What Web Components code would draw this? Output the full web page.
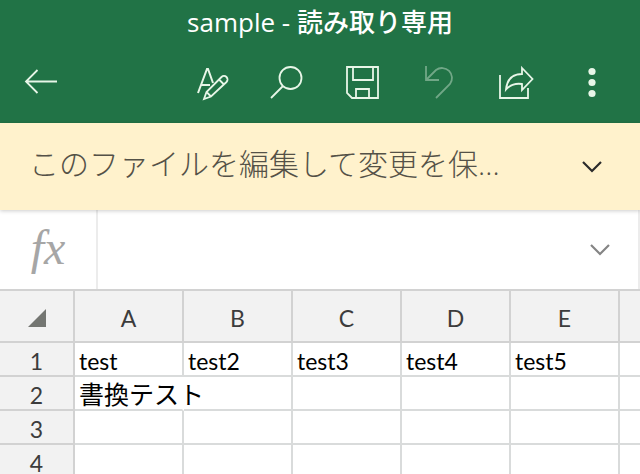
<!DOCTYPE html>
<html lang="ja">
<head>
<meta charset="utf-8">
<meta name="viewport" content="width=device-width, initial-scale=1">
<title>sample</title>
<style>
  body {
    margin: 0;
    background: #fff;
    font-family: "Open Sans", "Noto Sans CJK JP", sans-serif;
  }
  b {
    font-weight: 500;
  }
</style>
</head>
<body>
<sheet-app>
  <app-header slot="header">
    <span slot="title">sample - <b>読み取り専用</b></span>
    <icon-button slot="back" icon="back" label="戻る"></icon-button>
    <icon-button icon="edit" label="編集"></icon-button>
    <icon-button icon="search" label="検索"></icon-button>
    <icon-button icon="save" label="保存"></icon-button>
    <icon-button icon="undo" label="元に戻す" disabled></icon-button>
    <icon-button icon="share" label="共有"></icon-button>
    <icon-button icon="more" label="その他"></icon-button>
  </app-header>
  <message-bar slot="header">このファイルを編集して変更を保...</message-bar>
  <formula-bar slot="header"></formula-bar>
  <sheet-grid></sheet-grid>
</sheet-app>

<script>
const icons = {
  back: '<path d="M36 19.5H5M16.500 8L5 19.500L16.500 31"/>',
  edit: '<path stroke-width="2" d="M6 31L15 7h1l5 14M9 23h9"/><path d="M12 37l2.500-7L29.500 15a3.300 3.300 0 0 1 5 5L19 34.500zM14.500 30l4.500 4.500M27 17.500l5 5"/>',
  search: '<circle cx="22.500" cy="16" r="11"/><path d="M15 24L3 36"/>',
  save: '<path d="M3 5h31v31H8l-5-5zM9 5v13h20V5M12 36v-9h13v9"/>',
  undo: '<path d="M6 4v14h13M6 18L16 8a10 10 0 0 1 14 14L16 36"/>',
  share: '<path d="M4 13v23h28V26"/><path d="M26 6l10.500 11L26 28v-6c-7-1-12 1-16 5.500C11 18 16 12 26 12z"/>',
  more: '<g fill="currentColor" stroke="none"><circle cx="20" cy="9.500" r="3.600"/><circle cx="20" cy="20.500" r="3.600"/><circle cx="20" cy="31.500" r="3.600"/></g>',
  down: '<path d="M11 15L20 24L29 15" stroke-width="2.200"/>'
};

class IconButton extends HTMLElement {
  constructor() {
    super();
    this.attachShadow({ mode: "open" });
  }
  connectedCallback() {
    const icon = icons[this.getAttribute("icon")] || "";
    this.shadowRoot.innerHTML = `
      <style>
        :host {
          display: block;
          flex: none;
        }
        button {
          display: flex;
          align-items: center;
          justify-content: center;
          width: 76px;
          height: var(--button-height, 76px);
          margin: 0;
          padding: 0;
          border: 0;
          background: none;
          color: inherit;
        }
        button:disabled {
          opacity: 0.4;
        }
        svg {
          width: 40px;
          height: 40px;
          fill: none;
          stroke: currentColor;
        }
      </style>
      <button type="button"><svg viewBox="0 0 40 40" stroke-width="1.8" aria-hidden="true">${icon}</svg></button>
    `;
    const button = this.shadowRoot.querySelector("button");
    button.setAttribute("aria-label", this.getAttribute("label") || "");
    button.disabled = this.hasAttribute("disabled");
  }
}

class AppHeader extends HTMLElement {
  constructor() {
    super();
    this.attachShadow({ mode: "open" });
    this.shadowRoot.innerHTML = `
      <style>
        :host {
          display: block;
          padding-bottom: 3px;
          background: #217346;
          color: #e8f6e8;
        }
        h1 {
          margin: 0;
          font-size: 26px;
          line-height: 44px;
          font-weight: 400;
          text-align: center;
          color: #fff;
        }
        ::slotted(span) {
          white-space: nowrap;
        }
        nav {
          display: flex;
          justify-content: space-between;
          padding: 0 10px 0 3px;
        }
        .actions {
          display: flex;
        }
      </style>
      <h1><slot name="title"></slot></h1>
      <nav>
        <slot name="back"></slot>
        <div class="actions"><slot></slot></div>
      </nav>
    `;
  }
}

class MessageBar extends HTMLElement {
  constructor() {
    super();
    this.attachShadow({ mode: "open" });
    this.shadowRoot.innerHTML = `
      <style>
        :host {
          display: flex;
          align-items: center;
          justify-content: space-between;
          height: 87px;
          padding: 0 10px 0 29px;
          box-sizing: border-box;
          background: #fff2cc;
          box-shadow: 0 1px 4px #0003;
          position: relative;
          color: #545147;
          font-size: 30px;
          font-weight: 300;
          --button-height: 86px;
        }
        p {
          margin: 0;
          line-height: 44px;
          padding-bottom: 6px;
          white-space: nowrap;
        }
        icon-button {
          color: #2b2b2b;
        }
      </style>
      <p><slot></slot></p>
      <icon-button icon="down" label="展開"></icon-button>
    `;
  }
}

class FormulaBar extends HTMLElement {
  constructor() {
    super();
    this.attachShadow({ mode: "open" });
    this.shadowRoot.innerHTML = `
      <style>
        :host {
          display: flex;
          height: 79px;
          box-sizing: border-box;
          border-right: 2px solid #ececec;
          background: #fff;
          --button-height: 80px;
        }
        label {
          flex: none;
          width: 98px;
          box-sizing: border-box;
          border-right: 2px solid #ececec;
          text-align: center;
          font: italic 48px/76px "Liberation Serif", serif;
          color: #a6a6a6;
        }
        input {
          flex: 1;
          min-width: 0;
          border: 0;
          padding: 0 12px;
          background: none;
          font: 23px Lato, "Noto Sans CJK JP", sans-serif;
        }
        icon-button {
          color: #858585;
        }
      </style>
      <label for="formula">fx</label>
      <input id="formula" type="text">
      <icon-button icon="down" label="数式バーの展開"></icon-button>
    `;
  }
}

class SheetGrid extends HTMLElement {
  constructor() {
    super();
    this.attachShadow({ mode: "open" });
    this._columns = ["A", "B", "C", "D", "E", ""];
    this._rows = [
      ["test", "test2", "test3", "test4", "test5", ""],
      ["書換テスト", "", "", "", "", ""],
      ["", "", "", "", "", ""],
      ["", "", "", "", "", ""]
    ];
  }
  connectedCallback() {
    this._render();
  }
  _cell(text, index) {
    // Long text in the first column runs on over its empty neighbour
    const spill = index === 0 && text.length > 4 ? ' class="spill"' : "";
    return `<td${spill}>${text}</td>`;
  }
  _render() {
    this.shadowRoot.innerHTML = `
      <style>
        :host {
          display: block;
          border-top: 2px solid #d2d2d2;
        }
        table {
          width: 100%;
          table-layout: fixed;
          border-collapse: separate;
          border-spacing: 0;
          font: 23px/28px Lato, "Noto Sans CJK JP", sans-serif;
          color: #000;
        }
        .row-head {
          width: 75px;
        }
        .column {
          width: 109px;
        }
        th, td {
          height: 34px;
          box-sizing: border-box;
          padding: 4px 0 0;
          border-right: 2px solid #d9dbdb;
          border-bottom: 2px solid #d9dbdb;
          white-space: nowrap;
        }
        th {
          background: #f2f2f2;
          border-color: #d2d2d2;
          color: #3c3c3c;
          font-weight: 400;
        }
        thead th {
          height: 52px;
        }
        th:last-child, td:last-child {
          border-right: 0;
        }
        td {
          padding-left: 4px;
          text-align: left;
        }
        .spill {
          border-right-color: transparent;
          padding-top: 2px;
          font-size: 25px;
        }
        svg {
          display: block;
          width: 18px;
          height: 18px;
          margin: 0 auto;
          fill: #747672;
        }
      </style>
      <table>
        <colgroup>
          <col class="row-head">
          ${this._columns.map((name) => name ? '<col class="column">' : "<col>").join("")}
        </colgroup>
        <thead>
          <tr>
            <th><svg viewBox="0 0 18 18" aria-hidden="true"><path d="M18 0v18H0z"/></svg></th>
            ${this._columns.map((name) => `<th scope="col">${name}</th>`).join("")}
          </tr>
        </thead>
        <tbody>
          ${this._rows.map((row, i) => `
            <tr><th scope="row">${i + 1}</th>${row.map(this._cell).join("")}</tr>
          `).join("")}
        </tbody>
      </table>
    `;
  }
}

class SheetApp extends HTMLElement {
  constructor() {
    super();
    this.attachShadow({ mode: "open" });
    this.shadowRoot.innerHTML = `
      <style>
        :host {
          display: flex;
          flex-direction: column;
          height: 100vh;
          overflow: hidden;
        }
        header {
          flex: none;
        }
        main {
          flex: 1;
          min-height: 0;
          overflow: hidden;
        }
      </style>
      <header><slot name="header"></slot></header>
      <main><slot></slot></main>
    `;
  }
}

customElements.define("icon-button", IconButton);
customElements.define("app-header", AppHeader);
customElements.define("message-bar", MessageBar);
customElements.define("formula-bar", FormulaBar);
customElements.define("sheet-grid", SheetGrid);
customElements.define("sheet-app", SheetApp);
</script>
</body>
</html>
